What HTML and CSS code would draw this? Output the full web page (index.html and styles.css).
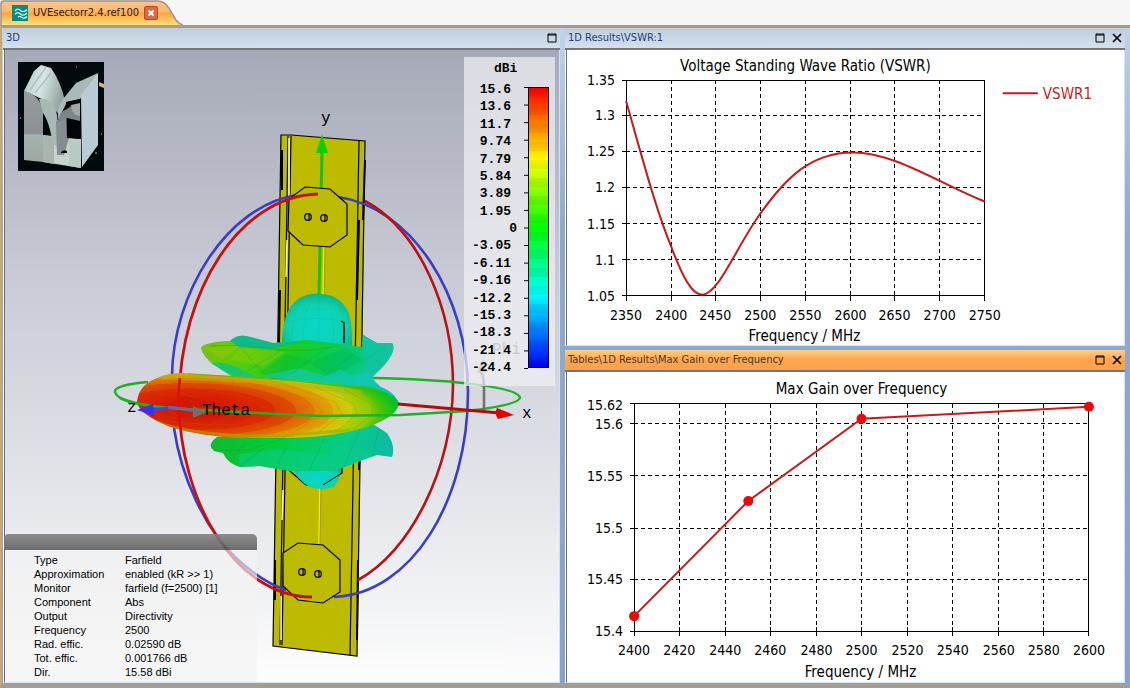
FILE: index.html
```html
<!DOCTYPE html>
<html lang="en">
<head>
<meta charset="utf-8">
<title>UVEsectorr2.4.ref100</title>
<link rel="stylesheet" href="styles.css">
</head>
<body>
<div class="app">
  <header class="tab-strip">
    <div class="doc-tab">
      <svg class="doc-tab-shape" viewBox="0 0 182 25" preserveAspectRatio="none" aria-hidden="true">
        <defs>
          <linearGradient id="tabFill" x1="0" y1="0" x2="0" y2="1">
            <stop offset="0" stop-color="#fbc896"/><stop offset="0.45" stop-color="#fdb765"/>
            <stop offset="0.5" stop-color="#fca43f"/><stop offset="1" stop-color="#ffe07c"/>
          </linearGradient>
        </defs>
        <path d="M1 25V4Q1 1 4 1H156Q164 1 168 8L175 20Q178 24 182 25Z" fill="url(#tabFill)"/>
        <path d="M1 25V4Q1 1 4 1H156Q164 1 168 8L175 20Q178 24 182 25" fill="none" stroke="#9b938a" stroke-width="1.5"/>
      </svg>
      <svg class="doc-icon" viewBox="0 0 16 16" aria-hidden="true">
        <rect width="16" height="16" fill="#068a86"/>
        <g fill="none" stroke="#d8f5f0" stroke-width="1.3">
          <path d="M3 6C5 3 7 4 8.500 5.500S12 7.500 15 4.500"/>
          <path d="M3 9.500C5 6.500 7 7.500 8.500 9S12 11 15 8"/>
          <path d="M6 12C8 10 9.500 12.500 11 13S13.500 13 15 11.500"/>
        </g>
      </svg>
      <a class="doc-name" href="#scene">UVEsectorr2.4.ref100</a>
      <button class="doc-close" type="button" aria-label="Close document">
        <svg viewBox="0 0 14 14"><path d="M4 4L10 10M10 4L4 10" stroke="#fff" stroke-width="2.400"/></svg>
      </button>
    </div>
  </header>

  <main class="workspace">
    <section class="pane pane-3d" id="scene">
      <div class="pane-title">
        <h2>3D</h2>
        <button class="win-btn" type="button" aria-label="Maximize"><svg viewBox="0 0 10 10"><path d="M1 1H9V9H1Z M1 2H9" fill="none" stroke="#000"/></svg></button>
      </div>
      <div class="viewport">
        <svg class="scene" viewBox="5 50 554 632" preserveAspectRatio="xMidYMid meet" role="img" aria-label="Farfield radiation pattern">
          <defs>
            <radialGradient id="mainLobe" gradientUnits="userSpaceOnUse" cx="0" cy="0" r="1" gradientTransform="translate(196 409) rotate(1) scale(208 54)">
              <stop offset="0.2" stop-color="#d81c04"/><stop offset="0.38" stop-color="#dc2c04"/>
              <stop offset="0.38" stop-color="#dd3c04"/><stop offset="0.48" stop-color="#de4c04"/>
              <stop offset="0.48" stop-color="#e06004"/><stop offset="0.57" stop-color="#e07804"/>
              <stop offset="0.57" stop-color="#e08c04"/><stop offset="0.66" stop-color="#dca406"/>
              <stop offset="0.66" stop-color="#d8b608"/><stop offset="0.75" stop-color="#cccc0a"/>
              <stop offset="0.75" stop-color="#b8cc08"/><stop offset="0.84" stop-color="#8ccc04"/>
              <stop offset="0.88" stop-color="#54c404"/><stop offset="0.95" stop-color="#12c41a"/>
              <stop offset="1" stop-color="#06b43c"/>
            </radialGradient>
            <linearGradient id="upperDisc" x1="0" y1="0" x2="1" y2="0.15">
              <stop offset="0" stop-color="#7cbc10"/><stop offset="0.2" stop-color="#62cc08"/>
              <stop offset="0.5" stop-color="#18cc20"/><stop offset="0.72" stop-color="#04cc5c"/>
              <stop offset="1" stop-color="#0cc8a8"/>
            </linearGradient>
            <linearGradient id="lowerDisc" x1="0" y1="0" x2="1" y2="0.1">
              <stop offset="0" stop-color="#12b82c"/><stop offset="0.4" stop-color="#04cc38"/>
              <stop offset="0.75" stop-color="#06cc84"/><stop offset="1" stop-color="#0cbca0"/>
            </linearGradient>
            <radialGradient id="bulb" cx="0.5" cy="0.6" r="0.62">
              <stop offset="0" stop-color="#08d6c8"/><stop offset="0.65" stop-color="#0ed2b4"/>
              <stop offset="1" stop-color="#08b480"/>
            </radialGradient>
            <clipPath id="lobeClip"><path d="M137 402C138 391 144 383 157 378Q168 373 182 373L233 376L300 381L367 387Q395 393 399 403Q398 415 373 425Q340 437 287 438H233Q190 434 168 426Q139 414 137 402Z"/></clipPath>
          </defs>

          <!-- Antenna panel -->
          <g stroke="#000" stroke-width="1.2">
            <path d="M281 135H291L365 141L357 656L273 646Z" fill="#bdbb00"/>
            <path d="M291 136L282 645M288 136L280 645" fill="none"/>
            <path d="M359 141L350 655" fill="none"/>
            <path d="M289 138V196M287 240L286 277M283 490L282 520M281 596V640" stroke="#f6f4e0" stroke-width="1.5"/>
            <path d="M282 150V190M280 290L277 450M365 160L363 220M362 380L359 470M275 560V600M358 560L357 640M359 220L357 300" stroke-width="2"/>
          </g>
          <path d="M324 246L319 544" stroke="#f2f000" stroke-width="1.5"/>
          <path d="M325 246L320 544" stroke="#8b8a00" stroke-width="0.700"/>

          <!-- Orbit circles behind the lobes -->
          <g fill="none" stroke-width="2.600">
            <path d="M297 195C226 206 173 294 172 376" stroke="#3b3dc6"/>
            <path d="M174 428C181 476 204 528 236 558Q262 582 286 590" stroke="#3b3dc6"/>
            <path d="M338 197C412 207 468 296 468 392C468 500 412 594 334 597" stroke="#3b3dc6"/>
            <path d="M365 201C420 231 453 309 453 385C452 470 410 552 358 580" stroke="#b91214"/>
            <path d="M148 382Q114 385 115 392Q118 403 160 407M372 378C440 379 519 386 520 398Q518 405 468 411" stroke="#1fb224" stroke-width="2.500"/>
            <path d="M484 411V386Q484 377 480 370" stroke="#707070"/>
          </g>
          <path d="M477 373L482 359L488 372Z" fill="#8c8c8c"/>
          <text class="axis-text phi" x="492" y="354">Phi</text>

          <!-- Y axis and mounting plates -->
          <path d="M322 152L319 297" stroke="#18c00e" stroke-width="3"/>
          <path d="M322 134L328 153H316Z" fill="#06d006"/>
          <g fill="#bdbb00" stroke="#000" stroke-width="1.2">
            <path d="M305 187L330 189L347 204V235L330 247L303 245L288 231L289 199Z"/>
            <path d="M298 543L323 545L340 560V592L323 603L298 600L283 586V553Z"/>
            <path d="M283 465L306 485L325 485L342 473V460" fill="none"/>
            <circle cx="308" cy="217" r="3.300"/><circle cx="324" cy="218" r="3.300"/>
            <circle cx="302" cy="572" r="3.300"/><circle cx="318" cy="574" r="3.300"/>
            <path d="M309 214V220M325 215V221M303 569V575M319 571V577" fill="none"/>
          </g>
          <path d="M318 194C240 196 180 290 179 400C179 500 235 597 312 597" fill="none" stroke="#c61010" stroke-width="2.800"/>

          <!-- Radiation lobes -->
          <path d="M282 346Q281 312 298 299Q308 293 320 294Q337 294 346 308Q353 318 352 348Z" fill="url(#bulb)"/>
          <g fill="none" stroke="#07ac92" stroke-opacity="0.250" stroke-width="0.700">
            <path d="M292 344Q291 312 304 297M303 342Q303 311 313 295M319 341V295M333 343Q336 315 326 295M343 345Q348 318 335 299M285 322Q316 314 350 323M287 312Q320 305 347 312"/>
          </g>
          <path d="M341 321L344 323V343" fill="none" stroke="#000" stroke-width="1.500"/>
          <path d="M293 468Q298 481 310 487Q322 491 333 487Q342 479 341 463Z" fill="url(#bulb)"/>
          <path d="M323 485L342 473" stroke="#000"/>

          <path d="M201 348Q204 342 230 341Q236 335 246 336L273 343L307 340L333 343L362 347L363 335L377 343L392 343Q396 348 389 359Q383 368 371 378L381 387Q397 393 399 406L367 397L280 384L233 377L216 366Q202 356 201 348Z" fill="url(#upperDisc)"/>
          <path d="M230 341Q236 335 246 336L273 343L305 341L270 349L240 347Z" fill="#0cba8c"/>
          <path d="M362 347L363 335L377 343L392 343Q396 348 389 359Q382 368 370 379L355 384L367 364Z" fill="#10c4a0"/>
          <path d="M211 363Q224 361 240 369L258 378L233 376Z" fill="#18c66c"/>
          <path d="M210 346Q240 344 275 349Q308 353 338 346" fill="none" stroke="#39a41a" stroke-opacity="0.600"/>
          <g fill="#a7c800" fill-opacity="0.350"><path d="M204 348L240 346L222 359ZM240 348L285 352L264 366L230 360Z"/></g>
          <g fill="#00a850" fill-opacity="0.250"><path d="M260 372L286 354L312 361L279 382ZM308 363L346 348L363 360L332 378Z"/></g>
          <g fill="#16c7c4" fill-opacity="0.600"><path d="M262 376L299 368L326 376L341 369L350 375L369 372L377 384L350 389Z"/></g>
          <path d="M233 377Q216 367 208 360M240 347L265 375M282 350L246 372M330 346L291 374M362 348L321 378M386 346L355 367" fill="none" stroke="#169d52" stroke-opacity="0.400" stroke-width="0.700"/>

          <path d="M217 437Q206 445 214 451L223 453Q227 463 240 467L260 466L290 471L330 471Q350 466 357 462L377 455L392 457Q396 446 387 433L373 424L340 431Z" fill="url(#lowerDisc)"/>
          <path d="M240 454L278 449L330 455L357 447L379 453L357 462Q346 468 330 471H290L260 466L238 467Z" fill="#0acc88" fill-opacity="0.600"/>
          <path d="M214 451L248 450L285 438M240 466L264 448M276 468L286 447M309 471L325 437M344 466L360 430M372 456L379 429M231 459L245 444" fill="none" stroke="#078b50" stroke-opacity="0.350" stroke-width="0.700"/>

          <path d="M137 402C138 391 144 383 157 378Q168 373 182 373L233 376L300 381L367 387Q395 393 399 403Q398 415 373 425Q340 437 287 438H233Q190 434 168 426Q139 414 137 402Z" fill="url(#mainLobe)"/>
          <g clip-path="url(#lobeClip)" fill="none">
            <path d="M188 372L233 375L300 380L392 391" stroke="#3dbd12" stroke-width="4" stroke-opacity="0.800"/>
            <path d="M162 377Q225 378 300 385L362 393" stroke="#b8b010" stroke-width="5" stroke-opacity="0.500"/>
            <path d="M150 419Q188 437 282 436L350 430" stroke="#a6a800" stroke-width="3" stroke-opacity="0.600"/>
            <g stroke="#b06a00" stroke-opacity="0.280" stroke-width="0.800">
              <path d="M196 388L250 398L269 411L239 425L195 424M220 384L277 397L299 412L265 430M248 383L310 399L323 412L292 434M280 383L335 402L342 414L316 434M314 386L354 404L357 414L337 431M344 389L373 405L371 416L354 429M142 391L180 397L223 410L181 419L146 412M155 384L204 401L240 411L210 425L156 420"/>
            </g>
            <path d="M166 405L183 396L216 402L238 410L220 417L181 418Z" fill="#d01000" fill-opacity="0.400"/>
          </g>

          <!-- Foreground axes -->
          <path d="M180 378Q176 410 181 430" fill="none" stroke="#d80e08" stroke-width="2.500"/>
          <path d="M120 398Q142 408 205 410Q270 414 320 416L400 415L468 411" fill="none" stroke="#1fb224" stroke-width="2.500"/>
          <path d="M398 404L500 413" stroke="#b40c0c" stroke-width="3"/>
          <path d="M497 408L514 415L498 419Q494 413 497 408Z" fill="#e60000"/>
          <path d="M150 410L178 407" stroke="#443fe8" stroke-width="3"/>
          <path d="M168 407L198 411" stroke="#716888" stroke-width="3"/>
          <path d="M137 410L153 404L154 416Z" fill="#3035f4"/>
          <path d="M193 406L207 412L193 418Z" fill="#6f706c"/>
          <text class="axis-text" x="202" y="415">Theta</text>
          <text class="axis-text" x="127" y="412">z</text>
          <text class="axis-text" x="321" y="123">y</text>
          <text class="axis-text" x="522" y="418">x</text>
        </svg>

        <svg class="thumb" viewBox="0 0 86 109" role="img" aria-label="Model preview">
          <defs>
            <linearGradient id="sheet" x1="0" y1="0" x2="1" y2="0.3"><stop offset="0" stop-color="#b4c6c9"/><stop offset="0.5" stop-color="#d6e6e6"/><stop offset="1" stop-color="#94a6a3"/></linearGradient>
            <linearGradient id="side" x1="0" y1="0" x2="0" y2="1"><stop offset="0" stop-color="#999da3"/><stop offset="0.600" stop-color="#8b9093"/><stop offset="0.620" stop-color="#a5b1ab"/><stop offset="1" stop-color="#9fa9a5"/></linearGradient>
          </defs>
          <rect width="86" height="109" fill="#030a0e"/>
          <path d="M6 29L16 9L23 3L33 6Q43 20 47 39L41 52L26 38L11 31Z" fill="url(#sheet)"/>
          <path d="M12 28L28 5M17 31L33 11" stroke="#a5b8b5" stroke-width="1.200"/>
          <path d="M6 29Q19 31 25 47V100L6 98Z" fill="url(#side)"/>
          <path d="M25 73L63 77V106L25 100Z" fill="#c6d3cd"/>
          <path d="M25 73L36 75V102L25 100Z" fill="#a9b5af"/>
          <path d="M21 37Q35 35 39 53L42 86L35 82Q31 59 25 51Z" fill="#a8b9b5"/>
          <path d="M38 59L49 53L51 76L46 93L39 93Z" fill="#848d91"/>
          <path d="M45 37L58 21L80 11L77 20L62 37L49 40L40 58Q39 44 45 37Z" fill="#a9b9bb"/>
          <path d="M48 40L62 37V77L49 76Z" fill="#020607"/>
          <path d="M49 47Q56 41 62 43V59L49 56L40 61Q40 50 49 47Z" fill="#7b8586"/>
          <path d="M53 43L62 41V54Q54 54 53 43Z" fill="#9fa9a9"/>
          <path d="M63 33L80 11V83L64 105Z" fill="#b9cbd4"/>
          <path d="M51 78L63 77V106L51 104Z" fill="#bbc9c5"/>
          <path d="M43 90Q46 87 49 89V91H43Z" fill="#07100f"/>
          <path d="M81 20L86 22V26L81 24Z" fill="#d3b58a"/>
          <path d="M58 5H59M2 56H3M83 72H84M77 91H79" stroke="#a7bcc0"/>
        </svg>

        <div class="legend">
          <div class="legend-unit">dBi</div>
          <div class="legend-scale">
            <ol class="legend-values">
              <li>15.6</li><li>13.6</li><li>11.7</li><li>9.74</li><li>7.79</li><li>5.84</li><li>3.89</li><li>1.95</li><li class="zero">0</li><li>-3.05</li><li>-6.11</li><li>-9.16</li><li>-12.2</li><li>-15.3</li><li>-18.3</li><li>-21.4</li><li>-24.4</li>
            </ol>
            <div class="legend-bar"></div>
          </div>
        </div>

        <div class="info">
          <div class="info-cap"></div>
          <dl class="info-list">
            <dt>Type</dt><dd>Farfield</dd>
            <dt>Approximation</dt><dd>enabled (kR &gt;&gt; 1)</dd>
            <dt>Monitor</dt><dd>farfield (f=2500) [1]</dd>
            <dt>Component</dt><dd>Abs</dd>
            <dt>Output</dt><dd>Directivity</dd>
            <dt>Frequency</dt><dd>2500</dd>
            <dt>Rad. effic.</dt><dd>0.02590 dB</dd>
            <dt>Tot. effic.</dt><dd>0.001766 dB</dd>
            <dt>Dir.</dt><dd>15.58 dBi</dd>
          </dl>
        </div>
      </div>
    </section>

    <div class="results">
      <section class="pane">
        <div class="pane-title">
          <h2>1D Results\VSWR:1</h2>
          <button class="win-btn" type="button" aria-label="Maximize"><svg viewBox="0 0 10 10"><path d="M1 1H9V9H1Z M1 2H9" fill="none" stroke="#000"/></svg></button>
          <button class="win-btn" type="button" aria-label="Close"><svg viewBox="0 0 10 10"><path d="M1 1L9 9M9 1L1 9" stroke="#000" stroke-width="1.600"/></svg></button>
        </div>
        <div class="plot">
          <svg class="chart" viewBox="567 50 556 294" role="img" aria-label="Voltage Standing Wave Ratio">
            <text class="mid label" x="805" y="71">Voltage Standing Wave Ratio (VSWR)</text>
            <path class="grid" d="M671 80V295M715 80V295M760 80V295M805 80V295M850 80V295M894 80V295M939 80V295M626 115H984M626 151H984M626 187H984M626 223H984M626 259H984"/>
            <path class="axis" d="M622 80H984V300M622 295H984M626 80V300M622 115H630M622 151H630M622 187H630M622 223H630M622 259H630M671 291V300M715 291V300M760 291V300M805 291V300M850 291V300M894 291V300M939 291V300"/>
            <g class="end"><text x="615" y="85">1.35</text><text x="615" y="120">1.3</text><text x="615" y="156">1.25</text><text x="615" y="192">1.2</text><text x="615" y="228">1.15</text><text x="615" y="264">1.1</text><text x="615" y="300">1.05</text></g>
            <g class="mid"><text x="626" y="319">2350</text><text x="671" y="319">2400</text><text x="715" y="319">2450</text><text x="760" y="319">2500</text><text x="805" y="319">2550</text><text x="850" y="319">2600</text><text x="894" y="319">2650</text><text x="939" y="319">2700</text><text x="984" y="319">2750</text><text class="label" x="804" y="340">Frequency / MHz</text></g>
            <path class="curve" d="M626 101C643 160 655 207 671 246C683 278 692 294 702 294C718 294 735 248 760 213C785 178 810 152 852 152C895 152 940 184 984 201"/>
            <path class="curve" d="M1002 93H1037"/>
            <text class="series label" x="1042" y="99">VSWR1</text>
          </svg>
        </div>
      </section>

      <section class="pane active">
        <div class="pane-title">
          <h2>Tables\1D Results\Max Gain over Frequency</h2>
          <button class="win-btn" type="button" aria-label="Maximize"><svg viewBox="0 0 10 10"><path d="M1 1H9V9H1Z M1 2H9" fill="none" stroke="#000"/></svg></button>
          <button class="win-btn" type="button" aria-label="Close"><svg viewBox="0 0 10 10"><path d="M1 1L9 9M9 1L1 9" stroke="#000" stroke-width="1.600"/></svg></button>
        </div>
        <div class="plot">
          <svg class="chart" viewBox="567 373 556 308" role="img" aria-label="Max Gain over Frequency">
            <text class="mid label" x="861" y="394">Max Gain over Frequency</text>
            <path class="grid" d="M679 404V631M725 404V631M770 404V631M816 404V631M861 404V631M907 404V631M952 404V631M998 404V631M1043 404V631M634 424H1088M634 476H1088M634 528H1088M634 579H1088"/>
            <path class="axis" d="M630 404H1088V636M630 631H1088M634 404V636M630 424H638M630 476H638M630 528H638M630 579H638M679 627V636M725 627V636M770 627V636M816 627V636M861 627V636M907 627V636M952 627V636M998 627V636M1043 627V636"/>
            <g class="end"><text x="623" y="410">15.62</text><text x="623" y="429">15.6</text><text x="623" y="481">15.55</text><text x="623" y="533">15.5</text><text x="623" y="584">15.45</text><text x="623" y="636">15.4</text></g>
            <g class="mid"><text x="634" y="655">2400</text><text x="679" y="655">2420</text><text x="725" y="655">2440</text><text x="770" y="655">2460</text><text x="816" y="655">2480</text><text x="861" y="655">2500</text><text x="907" y="655">2520</text><text x="952" y="655">2540</text><text x="998" y="655">2560</text><text x="1043" y="655">2580</text><text x="1088" y="655">2600</text><text class="label" x="860" y="677">Frequency / MHz</text></g>
            <path class="curve" d="M634 616L748 501L861 419L1088 407"/>
            <g class="dots"><circle cx="634" cy="616" r="5"/><circle cx="748" cy="501" r="5"/><circle cx="861" cy="419" r="5"/><circle cx="1088" cy="407" r="5"/></g>
          </svg>
        </div>
      </section>
    </div>
  </main>
</div>
</body>
</html>
```

FILE: styles.css
```css
* { box-sizing: border-box; }

body {
  margin: 0;
  font-family: "DejaVu Sans Condensed", "Noto Sans", sans-serif;
  font-size: 11px;
  color: #000;
}

.app {
  display: flex;
  flex-direction: column;
  min-height: 100vh;
  background: #f6f6f6;
}

/* Document tabs */
.tab-strip { height: 25px; display: flex; background: #f6f6f6; }
.doc-tab {
  position: relative;
  display: flex;
  align-items: center;
  gap: 5px;
  padding: 0 25px 0 12px;
}
.doc-tab-shape { position: absolute; inset: 0; width: 100%; height: 100%; }
.doc-icon { position: relative; width: 16px; height: 16px; }
.doc-name { position: relative; color: #2a2119; text-decoration: none; font-size: 11px; }
.doc-close {
  position: relative;
  width: 14px;
  height: 14px;
  padding: 0;
  border: 1px solid #b5482c;
  border-radius: 2px;
  background: #dc6844;
  display: grid;
}
.doc-close svg { width: 12px; height: 12px; }

/* Tiled windows */
.workspace {
  flex: 1;
  display: grid;
  grid-template-columns: 557fr 560fr;
  gap: 5px;
  padding: 0 5px 1px 1px;
  border-top: 3px solid #a79c88;
  border-left: 2px solid #c9a878;
  border-bottom: 4px solid #a79c92;
  background: linear-gradient(#bcd3f2, #8eaacd 30%, #86a3ce);
}
.results { display: grid; grid-template-rows: 318fr 333fr; gap: 4px; min-width: 0; }
.pane { display: flex; flex-direction: column; min-width: 0; min-height: 0; background: #fff; }
.pane-title {
  display: flex;
  align-items: center;
  gap: 7px;
  height: 22px;
  padding: 0 3px 1px 3px;
  background: linear-gradient(#c0cedb, #d3e1ee);
  border-bottom: 2px solid #737578;
}
.pane-title h2 { flex: 1; margin: 0; font-size: 11px; font-weight: normal; color: #1e3c84; }
.active .pane-title { background: linear-gradient(#fbd08a, #ffa44c 50%, #ffa24a); }
.active .pane-title h2 { color: #4a3a2c; }
.win-btn { width: 10px; height: 10px; padding: 0; border: 0; background: none; display: grid; }
.win-btn svg { width: 10px; height: 10px; }

.plot, .viewport {
  flex: 1;
  position: relative;
  min-height: 0;
  margin-left: 1px;
  border: 1px solid #d5e3ee;
  border-left: 1px solid #6b6d70;
  border-top: 0;
}
.viewport {
  background: linear-gradient(#a6a9b7, #c9cbd6 37%, #e3e5ea 70%, #fdfdfd);
}
.chart, .scene { position: absolute; inset: 0; width: 100%; height: 100%; }

.chart { font-size: 14px; }
.label { font-size: 15px; }
.mid { text-anchor: middle; }
.end { text-anchor: end; }
.axis, .grid { fill: none; stroke: #000; stroke-width: 1; shape-rendering: crispEdges; }
.grid { stroke-dasharray: 4 3; }
.curve { fill: none; stroke: #c81a1a; stroke-width: 2; }
.series { fill: #c81c1c; }
.dots { fill: #f00808; }

/* 3D viewport overlays */
.axis-text { font-family: "Liberation Mono", monospace; font-size: 16px; }
.phi { fill: #666; }
.thumb { position: absolute; left: 13px; top: 12px; width: 86px; height: 109px; }

.legend {
  position: absolute;
  top: 7px;
  right: 4px;
  width: 91px;
  height: 329px;
  background: rgba(240, 240, 242, 0.72);
  font: bold 13px/17px "Liberation Mono", monospace;
}
.legend-unit { padding: 3px 0 0 30px; height: 24px; }
.legend-scale { display: flex; justify-content: space-between; padding-right: 6px; }
.legend-values {
  width: 54px;
  height: 295px;
  margin: 0;
  padding: 0 7px 0 0;
  list-style: none;
  display: flex;
  flex-direction: column;
  justify-content: space-between;
  text-align: right;
}
.legend-values .zero { margin-right: -6px; }
.legend-bar {
  position: relative;
  width: 21px;
  height: 281px;
  margin-top: 6px;
  border: 1px solid #000;
  background:
    repeating-linear-gradient(rgba(0, 0, 0, 0.05) 0 9px, transparent 9px 18px),
    linear-gradient(#f00, #ff0 26%, #0f0 50%, #0ff 74%, #00f);
}
.legend-bar::before {
  content: "";
  position: absolute;
  left: -5px;
  top: -1px;
  width: 4px;
  height: 281px;
  background: linear-gradient(#000 1px, transparent 1px) 0 0 / 100% calc(100% / 16);
  border-bottom: 1px solid #000;
}

.info { position: absolute; left: 0; bottom: 0; width: 252px; font: 11px/14px "Liberation Sans", Arial, sans-serif; }
.info-cap { height: 16px; border-radius: 3px 5px 0 0; background: linear-gradient(rgba(130, 130, 130, 0.9), rgba(95, 95, 95, 0.9)); }
.info-list {
  display: grid;
  grid-template-columns: 91px 1fr;
  margin: 0;
  padding: 3px 0 3px 29px;
  background: rgba(242, 242, 242, 0.65);
}
.info-list dd { margin: 0; }
```
